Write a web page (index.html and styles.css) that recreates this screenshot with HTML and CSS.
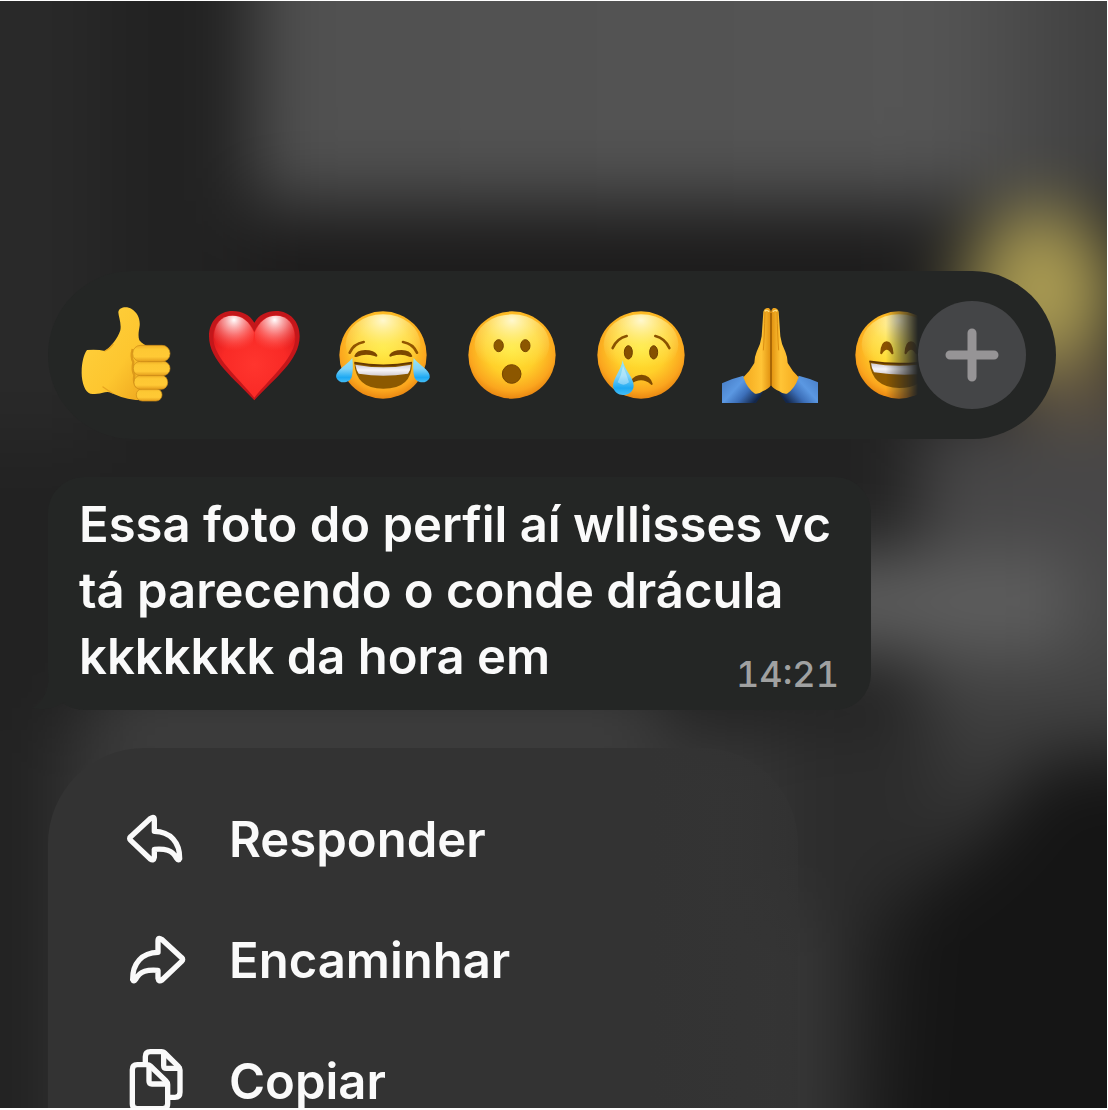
FILE: index.html
```html
<!DOCTYPE html>
<html lang="pt-BR">
<head>
    <meta charset="UTF-8">
    <meta name="viewport" content="width=device-width, initial-scale=1.0">
    <title>Mensagem</title>
    <link rel="stylesheet" href="styles.css">
</head>
<body>
    <main class="screen">
        <!-- fundo desfocado da conversa -->
        <svg class="backdrop" viewBox="0 0 1108 1108" preserveAspectRatio="none" aria-hidden="true">
            <defs>
                <filter id="blur" filterUnits="userSpaceOnUse" x="-200" y="-200" width="1508" height="1508" color-interpolation-filters="sRGB">
                    <feGaussianBlur stdDeviation="34"/>
                </filter>
                <linearGradient id="wall" x2="1" y2="0">
                    <stop offset="0" stop-color="#505050"/>
                    <stop offset=".65" stop-color="#555"/>
                    <stop offset=".82" stop-color="#3e3e3e"/>
                </linearGradient>
                <linearGradient id="right" x2="0" y2="1">
                    <stop offset="0" stop-color="#474647"/>
                    <stop offset=".45" stop-color="#484848"/>
                    <stop offset="1" stop-color="#2e2e2e"/>
                </linearGradient>
            </defs>
            <g filter="url(#blur)">
                <rect x="-200" y="-200" width="1508" height="1508" fill="#222"/>
                <rect x="-200" y="-200" width="300" height="640" fill="#292929"/>
                <rect x="255" y="-200" width="1053" height="400" fill="url(#wall)"/>
                <rect x="250" y="235" width="660" height="90" fill="#1c1b1b"/>
                <rect x="920" y="420" width="388" height="460" fill="url(#right)"/>
                <rect x="800" y="555" width="270" height="95" fill="#5e5e5e"/>
                <rect x="60" y="730" width="780" height="578" fill="#373737"/>
                <rect x="100" y="690" width="560" height="50" fill="#444"/>
                <rect x="780" y="720" width="160" height="190" fill="#2c2c2c"/>
                <path d="M905 900Q990 850 1040 760L1308 740V1308H880Z" fill="#151515"/>
                <ellipse cx="1042" cy="290" rx="74" ry="84" fill="#a99a52"/>
                <rect x="1020" y="360" width="120" height="60" fill="#5f523f"/>
            </g>
        </svg>

        <!-- degradês usados pelos emojis -->
        <svg class="defs" aria-hidden="true">
            <defs>
                <radialGradient id="face" cx=".5" cy=".42" r=".6">
                    <stop offset="0" stop-color="#ffe82e"/>
                    <stop offset=".5" stop-color="#ffd02a"/>
                    <stop offset=".82" stop-color="#fba61e"/>
                    <stop offset="1" stop-color="#e5800f"/>
                </radialGradient>
                <radialGradient id="shine" cx=".5" cy=".1" r=".8">
                    <stop offset="0" stop-color="#fff8cf"/>
                    <stop offset=".5" stop-color="#fff38a" stop-opacity=".45"/>
                    <stop offset="1" stop-color="#fff38a" stop-opacity="0"/>
                </radialGradient>
                <linearGradient id="teeth" x2="0" y2="1">
                    <stop offset="0" stop-color="#d0cbd4"/>
                    <stop offset=".5" stop-color="#f6f4f7"/>
                    <stop offset="1" stop-color="#d3ccd0"/>
                </linearGradient>
                <linearGradient id="tear" x2="0" y2="1">
                    <stop offset="0" stop-color="#9be6f2"/>
                    <stop offset=".45" stop-color="#7fd3f7"/>
                    <stop offset=".8" stop-color="#1da9f3"/>
                    <stop offset="1" stop-color="#45bdf5"/>
                </linearGradient>
                <radialGradient id="heart" cx=".5" cy=".6" r=".65">
                    <stop offset="0" stop-color="#ff352e"/>
                    <stop offset=".6" stop-color="#f92a26"/>
                    <stop offset="1" stop-color="#d9181b"/>
                </radialGradient>
                <radialGradient id="heartShine" cx=".5" cy=".1" r=".75">
                    <stop offset="0" stop-color="#fff"/>
                    <stop offset=".4" stop-color="#ffb4b4" stop-opacity=".7"/>
                    <stop offset="1" stop-color="#ff5c55" stop-opacity="0"/>
                </radialGradient>
                <linearGradient id="skin" x2="1" y2="1">
                    <stop offset="0" stop-color="#ffd23f"/>
                    <stop offset=".6" stop-color="#fdc62f"/>
                    <stop offset="1" stop-color="#eda41d"/>
                </linearGradient>
                <linearGradient id="finger" x2="0" y2="1">
                    <stop offset="0" stop-color="#f0b026"/>
                    <stop offset=".25" stop-color="#fdc833"/>
                    <stop offset=".7" stop-color="#ffc935"/>
                    <stop offset="1" stop-color="#e39c1b"/>
                </linearGradient>
                <linearGradient id="palm" x2="1" y2="0">
                    <stop offset="0" stop-color="#f4a91d"/>
                    <stop offset=".65" stop-color="#ffc436"/>
                    <stop offset="1" stop-color="#e0900f"/>
                </linearGradient>
                <linearGradient id="sleeve" x2="1" y2=".6">
                    <stop offset="0" stop-color="#4479c2"/>
                    <stop offset=".45" stop-color="#5b98e2"/>
                    <stop offset=".7" stop-color="#3c6fb9"/>
                    <stop offset="1" stop-color="#14274a"/>
                </linearGradient>
                <g id="head">
                    <circle cx="144" cy="144" r="131" fill="url(#face)"/>
                    <ellipse cx="144" cy="112" rx="112" ry="90" fill="url(#shine)"/>
                </g>
            </defs>
        </svg>

        <div class="reactions">
            <div class="reaction-list">
                <button class="reaction" aria-label="Curtir">
                    <svg viewBox="0 0 288 288">
                        <path d="M30 129Q60 126 84 132C104 117 122 94 130 70C134 48 124 28 124 16C126 -2 152 -2 164 6C180 16 190 34 188 56C186 70 182 84 187 100C195 110 206 115 216 120L200 280Q150 280 112 262Q96 252 84 256Q60 264 40 260C24 256 13 224 14 194C14 168 20 142 30 129Z" fill="url(#skin)"/>
                        <path d="M84 132Q100 124 108 112M78 240Q92 250 106 258" fill="none" stroke="#e8a620" stroke-width="4" stroke-linecap="round"/>
                        <path d="M167 126Q160 150 169 165Q164 190 172 204Q168 228 178 240" fill="none" stroke="#dd9a1a" stroke-width="7"/>
                        <g fill="url(#finger)" stroke="#cb8b17" stroke-width="2">
                            <rect x="178" y="245" width="77" height="37" rx="18"/>
                            <rect x="171" y="205" width="101" height="42" rx="20"/>
                            <rect x="169" y="163" width="110" height="43" rx="21"/>
                            <rect x="167" y="115" width="112" height="49" rx="24"/>
                        </g>
                    </svg>
                </button>
                <button class="reaction" aria-label="Amei">
                    <svg viewBox="0 0 288 288">
                        <path d="M145 47C132 24 108 12 80 12C38 12 9 44 9 88C9 160 84 214 145 280C206 214 281 160 281 88C281 44 252 12 210 12C182 12 158 24 145 47Z" fill="#c4161a"/>
                        <path d="M145 75C130 42 108 25 80 25C44 25 22 52 22 90C22 152 92 206 145 272C198 206 268 152 268 90C268 52 246 25 210 25C182 25 160 42 145 75Z" fill="url(#heart)"/>
                        <path id="lobe" d="M144 77C130 42 108 26 80 26C46 26 24 50 24 90Q40 150 90 150Q144 140 144 77Z" fill="url(#heartShine)"/>
                        <use href="#lobe" transform="translate(290 0) scale(-1 1)"/>
                    </svg>
                </button>
                <button class="reaction" aria-label="Haha">
                    <svg viewBox="0 0 288 288">
                        <use href="#head"/>
                        <path d="M44 137Q56 110 86 105M246 137Q234 110 204 105" fill="none" stroke="#925500" stroke-width="8" stroke-linecap="round"/>
                        <path d="M58 147Q64 129 90 129Q118 129 127 144Q128 152 118 147Q90 138 67 149Q58 152 58 147ZM232 147Q226 129 200 129Q172 129 163 144Q162 152 172 147Q200 138 223 149Q232 152 232 147Z" fill="#7c4700"/>
                        <path d="M58 167Q145 183 231 167Q231 245 145 245Q62 245 58 167Z" fill="#8c5900"/>
                        <path d="M61 173Q145 189 228 173Q227 190 219 200Q145 212 71 200Q64 190 61 173Z" fill="url(#teeth)"/>
                        <path d="M58 167Q145 183 231 167" fill="none" stroke="#633700" stroke-width="5"/>
                        <path d="M52 153Q56 187 50 210C44 230 12 232 4 212C0 190 32 178 52 153ZM236 153Q232 187 238 210C244 230 276 232 284 212C288 190 256 178 236 153Z" fill="url(#tear)"/>
                    </svg>
                </button>
                <button class="reaction" aria-label="Uau">
                    <svg viewBox="0 0 288 288">
                        <use href="#head"/>
                        <g fill="#8c5700" stroke="#764500" stroke-width="3">
                            <ellipse cx="104" cy="116" rx="14" ry="18"/>
                            <ellipse cx="184" cy="116" rx="14" ry="18"/>
                            <ellipse cx="143" cy="201" rx="28" ry="28"/>
                        </g>
                    </svg>
                </button>
                <button class="reaction" aria-label="Triste">
                    <svg viewBox="0 0 288 288">
                        <use href="#head"/>
                        <path d="M59 123Q72 94 101 87M229 123Q216 94 187 87" fill="none" stroke="#8a5200" stroke-width="8" stroke-linecap="round"/>
                        <g fill="#855000" stroke="#704000" stroke-width="3">
                            <ellipse cx="106" cy="136" rx="12" ry="20"/>
                            <ellipse cx="182" cy="136" rx="12" ry="20"/>
                        </g>
                        <path d="M112 221Q126 203 146 203Q172 205 179 230Q178 237 172 231Q145 208 112 232Z" fill="#804b00"/>
                        <path d="M89 160C94 190 122 210 122 236C120 272 64 274 60 238C60 214 84 190 89 160Z" fill="url(#tear)"/>
                        <path d="M90 176Q102 206 108 226Q92 240 74 226Q86 204 90 176Z" fill="#fff" opacity=".35"/>
                    </svg>
                </button>
                <button class="reaction" aria-label="Obrigado">
                    <svg viewBox="0 0 288 288">
                        <g id="prayHand">
                            <path d="M0 229Q30 214 64 206Q76 246 110 258L124 252Q116 272 102 288H0Z" fill="url(#sleeve)"/>
                            <path d="M124 14Q128 1 140 3Q147 6 147 20V234Q140 246 122 253Q112 262 99 260Q76 246 64 211Q84 192 97 168Q97 150 104 134Q116 112 119 88Z" fill="url(#palm)"/>
                            <path d="M129 14Q127 90 124 130" fill="none" stroke="#dc8e10" stroke-width="3"/>
                            <path d="M129 13Q132 7 142 14" fill="none" stroke="#ffe08a" stroke-width="4"/>
                        </g>
                        <use href="#prayHand" transform="translate(294 0) scale(-1 1)"/>
                        <path d="M147 18V236" stroke="#8f5200" stroke-width="4"/>
                    </svg>
                </button>
                <button class="reaction" aria-label="Sorriso">
                    <svg viewBox="0 0 288 288">
                        <use href="#head"/>
                        <path d="M91 138Q93 106 107 106Q121 106 124 138Q107 112 91 138ZM164 138Q166 106 180 106Q194 106 197 138Q180 112 164 138Z" fill="#8a5200" stroke="#8a5200" stroke-width="7" stroke-linejoin="round"/>
                        <path d="M55 163Q145 177 233 163Q230 243 145 243Q62 243 55 163Z" fill="#8c5900"/>
                        <path d="M60 169Q145 184 229 169Q228 187 221 200Q145 208 69 196Q62 186 60 169Z" fill="url(#teeth)"/>
                        <path d="M55 163Q145 177 233 163" fill="none" stroke="#633700" stroke-width="5"/>
                    </svg>
                </button>
            </div>
            <button class="more" aria-label="Mais reações">
                <svg viewBox="0 0 54 54"><path d="M27 5V49M5 27H49"/></svg>
            </button>
        </div>

        <div class="bubble">
            <svg class="tail" viewBox="0 0 48 40" aria-hidden="true"><path d="M17 0C17 20 12 32 0 38Q18 42 32 32L48 40V0Z"/></svg>
            <p>Essa foto do perfil aí wllisses vc tá parecendo o conde drácula kkkkkkk da hora em</p>
            <time datetime="14:21">14:21</time>
        </div>

        <div class="menu">
            <button class="menu-item">
                <svg viewBox="0 0 180 180">
                    <path id="arrow" d="M17 80L77 25Q88 17 88 30V64C136 64 165 98 164 146Q161 154 155 145C142 118 118 116 88 118V142Q86 154 76 147L17 91Q11 85 17 80Z"/>
                </svg>
                Responder
            </button>
            <button class="menu-item">
                <svg viewBox="0 0 180 180">
                    <use href="#arrow" transform="translate(187 0) scale(-1 1)"/>
                </svg>
                Encaminhar
            </button>
            <button class="menu-item">
                <svg viewBox="0 0 180 180">
                    <path d="M61 32V14Q61 -1 76 -1H110Q115 -1 119 3L160 43Q165 48 165 54V121Q165 136 150 136H136"/>
                    <path d="M116 2V41Q116 49 124 49H163"/>
                    <path d="M37 38H66Q72 38 76 42L123 87Q128 92 128 98V155Q128 170 113 170H37Q22 170 22 155V53Q22 38 37 38Z"/>
                    <path d="M72 41V87Q72 96 81 96H127"/>
                </svg>
                Copiar
            </button>
        </div>
    </main>
</body>
</html>
```

FILE: styles.css
```css
* {
    box-sizing: border-box;
}
body {
    margin: 0;
    padding: 1px 1px 2px 0;
    background: #fff;
    color: #fafafa;
    font-family: Inter, 'Liberation Sans', sans-serif;
}
button {
    border: none;
    padding: 0;
    background: none;
    color: inherit;
    font: inherit;
    cursor: pointer;
}
.screen {
    position: relative;
    display: flex;
    flex-direction: column;
    height: calc(100vh - 3px);
    padding: 270px 51px 0 48px;
    overflow: hidden;
    background: #232323;
}
.backdrop {
    position: absolute;
    top: 0;
    left: 0;
    width: 100%;
    height: 100%;
}
.defs {
    position: absolute;
    width: 0;
    height: 0;
}

/* barra de reações */
.reactions {
    position: relative;
    flex: none;
    display: flex;
    align-items: center;
    height: 168px;
    padding: 0 30px 0 29px;
    border-radius: 84px;
    background: #242625;
}
.reaction-list {
    flex: 1;
    min-width: 0;
    display: flex;
    gap: 33px;
    overflow: hidden;
    -webkit-mask-image: linear-gradient(to left, transparent 0, #000 32px);
    mask-image: linear-gradient(to left, transparent 0, #000 32px);
}
.reaction {
    flex: none;
    width: 96px;
    height: 96px;
}
.reaction svg {
    display: block;
}
.more {
    flex: none;
    display: flex;
    align-items: center;
    justify-content: center;
    width: 108px;
    height: 108px;
    border-radius: 50%;
    background: #444547;
}
.more svg {
    width: 54px;
    fill: none;
    stroke: #969496;
    stroke-width: 9;
    stroke-linecap: round;
}

/* mensagem */
.bubble {
    position: relative;
    flex: none;
    max-width: 823px;
    margin-top: 38px;
    padding: 15px 30px 20px 31px;
    border-radius: 36px;
    background: #242625;
}
.bubble p {
    margin: 0;
    font-size: 49px;
    font-weight: 600;
    line-height: 66px;
}
.bubble time {
    position: absolute;
    right: 32px;
    bottom: 16px;
    color: #a0a1a1;
    font-size: 36px;
    font-weight: 500;
    line-height: 40px;
    font-variant-numeric: tabular-nums;
}
.tail {
    position: absolute;
    left: -16px;
    bottom: 0;
    width: 48px;
    height: 40px;
    fill: #242625;
}

/* menu de ações */
.menu {
    position: relative;
    flex: none;
    max-width: 750px;
    margin-top: 38px;
    padding: 31px 0;
    border-radius: 96px 96px 0 0;
    background: linear-gradient(to right, #333 80%, rgba(51, 51, 51, .6));
}
.menu-item {
    display: flex;
    align-items: center;
    gap: 44px;
    width: 100%;
    height: 121px;
    padding: 0 77px;
    font-size: 49px;
    font-weight: 600;
}
.menu-item svg {
    width: 60px;
    height: 60px;
    overflow: visible;
    fill: none;
    stroke: #fafafa;
    stroke-width: 16;
    stroke-linejoin: round;
    stroke-linecap: round;
}
```
